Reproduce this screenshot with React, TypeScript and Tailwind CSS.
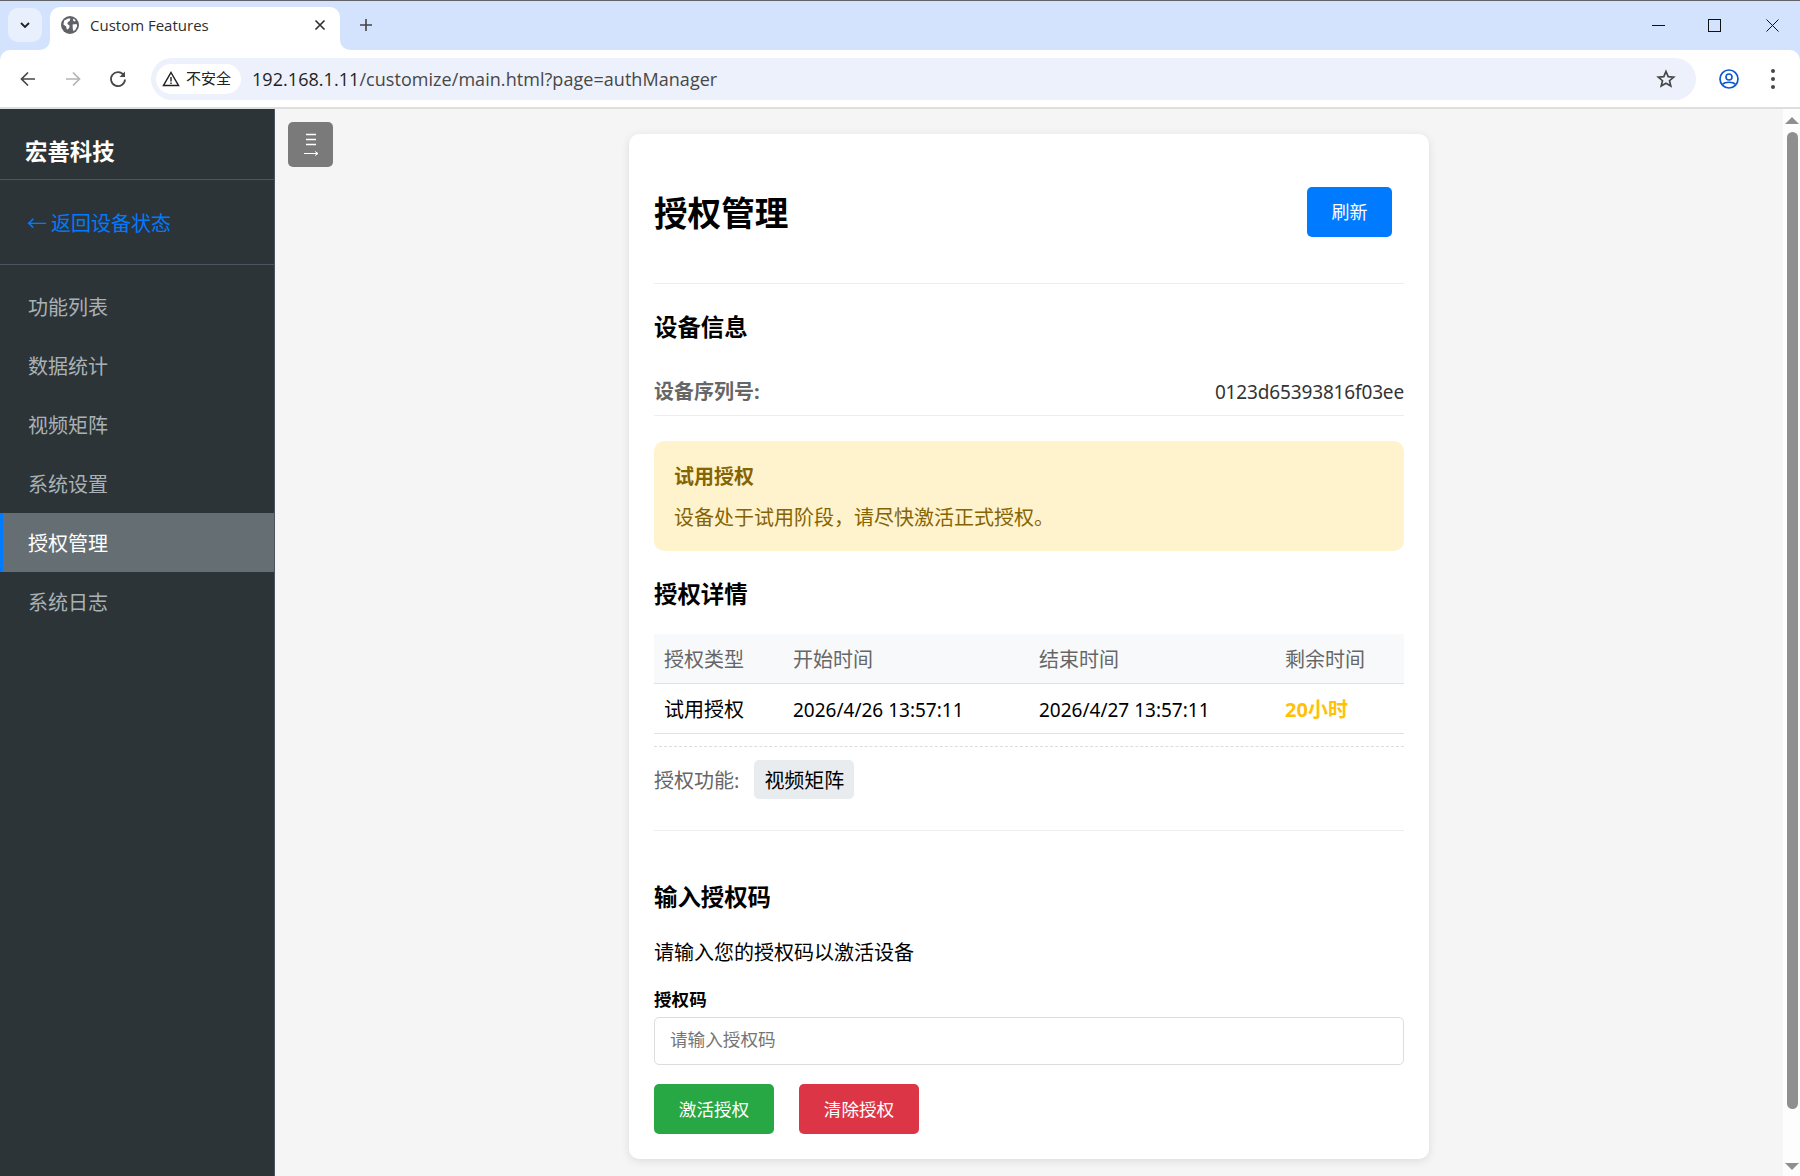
const cjk = '[font-family:"Noto_Sans","Noto_Sans_CJK_SC",sans-serif]';

function Flare({ side }: { side: "left" | "right" }) {
  return (
    <svg width="10" height="10" viewBox="0 0 10 10" className={side === "left" ? "absolute bottom-0 -left-[10px]" : "absolute bottom-0 -right-[10px]"}>
      <path d={side === "left" ? "M10 0 A10 10 0 0 1 0 10 L10 10 Z" : "M0 0 A10 10 0 0 0 10 10 L0 10 Z"} fill="#ffffff" />
    </svg>
  );
}

function Globe() {
  return (
    <svg width="18" height="18" viewBox="0 0 18 18">
      <circle cx="9" cy="9" r="9" fill="#5f6368" />
      <path d="M3.2 4.6 L7.2 2.4 L9.4 2.6 L8.8 4.8 L6.8 6.2 L6.4 8 L8.6 9.4 L8.4 11.4 L6.8 13.6 L5.6 13 L5.2 10.4 L2.4 8.4 Z" fill="#ffffff" />
      <path d="M11.6 8.4 L15.6 8 L16.2 10 L14.6 13.4 L12.6 15.2 L11.8 13 Z M12.2 2.6 L14.4 4 L14.2 5.4 L12.2 5 Z" fill="#ffffff" />
    </svg>
  );
}

function Chrome() {
  return (
    <header className="shrink-0">
      <div className="h-[50px] bg-[#d3e3fd] border-t border-[#5f6368] relative flex">
        <div className="ml-2 mt-[7px] w-[34px] h-[34px] rounded-[10px] bg-[#e9f0fd] flex items-center justify-center">
          <svg width="12" height="12" viewBox="0 0 12 12"><path d="M2 4 L6 8 L10 4" fill="none" stroke="#1f1f1f" strokeWidth="1.8" /></svg>
        </div>
        <div className="relative ml-[8px] mt-[6px] w-[290px] h-[43px] bg-white rounded-t-[10px] flex items-center pl-[11px] pb-[7px]">
          <Flare side="left" />
          <Flare side="right" />
          <Globe />
          <span className='ml-[11px] text-[15px] text-[#2e2e2e] font-["Open_Sans",sans-serif]'>Custom Features</span>
          <svg className="absolute left-[264px] top-[12px]" width="12" height="12" viewBox="0 0 12 12"><path d="M1.5 1.5 L10.5 10.5 M10.5 1.5 L1.5 10.5" stroke="#333" strokeWidth="1.7" /></svg>
        </div>
        <svg className="ml-[19px] mt-[17px]" width="14" height="14" viewBox="0 0 14 14"><path d="M7 1 V13 M1 7 H13" stroke="#444" strokeWidth="1.6" /></svg>
        <div className="ml-auto flex items-start">
          <svg className="mt-[24px] mr-[43px]" width="13" height="1" viewBox="0 0 13 1"><path d="M0 .5 H13" stroke="#111" /></svg>
          <svg className="mt-[18px] mr-[45px]" width="13" height="13" viewBox="0 0 13 13"><rect x=".5" y=".5" width="12" height="12" fill="none" stroke="#111" /></svg>
          <svg className="mt-[18px] mr-[21px]" width="13" height="13" viewBox="0 0 13 13"><path d="M.5 .5 L12.5 12.5 M12.5 .5 L.5 12.5" stroke="#111" /></svg>
        </div>
      </div>
      <div className="bg-[#d3e3fd]">
        <div className="h-[57px] bg-white rounded-t-[10px] flex items-center relative">
          <svg className="ml-[18px]" width="20" height="20" viewBox="0 0 20 20"><path d="M17 10 H4 M10 3.5 L3.5 10 L10 16.5" fill="none" stroke="#474747" strokeWidth="1.7" /></svg>
          <svg className="ml-[25px]" width="20" height="20" viewBox="0 0 20 20"><path d="M3 10 H16 M10 3.5 L16.5 10 L10 16.5" fill="none" stroke="#b4b4b4" strokeWidth="1.7" /></svg>
          <svg className="ml-[25px]" width="20" height="20" viewBox="0 0 20 20"><path d="M15.8 6.2 A7 7 0 1 0 17 10.5" fill="none" stroke="#474747" strokeWidth="1.8" /><path d="M17 2.5 V8 H11.5 Z" fill="#474747" /></svg>
          <div className="ml-[23px] w-[1545px] h-[42px] rounded-full bg-[#ecf1fb] flex items-center pl-[5px]">
            <div className={`w-[85px] h-[30px] rounded-full bg-white flex items-center pl-[6px] ${cjk}`}>
              <svg width="18" height="18" viewBox="0 0 18 18"><path d="M9 2.5 L16.5 15.5 H1.5 Z" fill="none" stroke="#222" strokeWidth="1.5" /><path d="M9 7 V11.5 M9 12.5 V14" stroke="#222" strokeWidth="1.4" /></svg>
              <span className="ml-[6px] text-[15px] text-[#222] whitespace-nowrap">不安全</span>
            </div>
            <div className='ml-[11px] pt-px text-[18px] text-[#474747] font-["Open_Sans",sans-serif] tracking-[0.05px] whitespace-nowrap'>
              <span className="text-[#1f1f1f]">192.168.1.11</span>/customize/main.html?page=authManager
            </div>
            <svg className="ml-auto mr-[20px]" width="20" height="20" viewBox="0 0 20 20"><path d="M10 2.5 L12.2 7.6 L17.7 8.1 L13.5 11.7 L14.8 17.1 L10 14.3 L5.2 17.1 L6.5 11.7 L2.3 8.1 L7.8 7.6 Z" fill="none" stroke="#474747" strokeWidth="1.7" strokeLinejoin="miter" /></svg>
          </div>
          <svg className="ml-[23px]" width="20" height="20" viewBox="0 0 20 20"><circle cx="10" cy="10" r="9" fill="none" stroke="#0b57d0" strokeWidth="1.7" /><circle cx="10" cy="8" r="3" fill="none" stroke="#0b57d0" strokeWidth="1.6" /><path d="M3.8 15.2 C6 12.6 14 12.6 16.2 15.2" fill="none" stroke="#0b57d0" strokeWidth="1.7" /></svg>
          <div className="ml-[32px] flex flex-col gap-[4px]">
            <span className="w-[4px] h-[4px] rounded-full bg-[#474747]" />
            <span className="w-[4px] h-[4px] rounded-full bg-[#474747]" />
            <span className="w-[4px] h-[4px] rounded-full bg-[#474747]" />
          </div>
        </div>
      </div>
      <div className="h-[2px] bg-[#dedede]" />
    </header>
  );
}

const menu = ["功能列表", "数据统计", "视频矩阵", "系统设置", "授权管理", "系统日志"];

function Sidebar() {
  return (
    <aside className="w-[275px] shrink-0 bg-[#2c3437] border-r border-[#4a5560]">
      <div className="h-[71px] pt-[28px] pl-[25px] border-b border-[#4a5560]">
        <div className="text-[22.4px] leading-[30px] font-bold text-white">宏善科技</div>
      </div>
      <div className="h-[85px] pl-[27px] pt-[4px] flex items-center border-b border-[#4a5560] text-[20px] text-[#007bff]">
        <span className="mr-[4px]">←</span>
        <span>返回设备状态</span>
      </div>
      <nav className="pt-[12px]">
        {menu.map((m) =>
          m === "授权管理" ? (
            <div key={m} className="h-[59px] pt-[3px] flex items-center pl-[25px] border-l-[3px] border-[#007bff] bg-[#656f73] text-[20px] text-white">{m}</div>
          ) : (
            <div key={m} className="h-[59px] pt-[3px] flex items-center pl-[28px] text-[20px] text-[#a9b1b6]">{m}</div>
          )
        )}
      </nav>
    </aside>
  );
}

function H2({ children, className }: { children: React.ReactNode; className: string }) {
  return <h2 className={`text-[23.4px] leading-[32px] font-bold text-black ${className}`}>{children}</h2>;
}

function Card() {
  return (
    <section className="w-[800px] mx-auto mt-[25px] bg-white rounded-[10px] shadow-[0_2px_10px_rgba(0,0,0,0.1)] px-[25px] pt-[25px] pb-[25px]">
      <div className="mt-[28px] h-[50px] mb-[46px] flex items-center justify-between pr-3">
        <h1 className="pt-[1px] text-[33.6px] font-bold text-black leading-[50px]">授权管理</h1>
        <button className="w-[85px] h-[50px] rounded-[5px] bg-[#007bff] text-white text-[18px]">刷新</button>
      </div>
      <div className="h-px bg-[#eeeeee]" />
      <H2 className="mt-[27px]">设备信息</H2>
      <div className="mt-[26px] h-[47px] flex items-center justify-between border-b border-[#eeeeee] text-[20px]">
        <span className="font-bold text-[#666666]">设备序列号:</span>
        <span className="text-[19px] tracking-[-0.15px] text-[#333333]">0123d65393816f03ee</span>
      </div>
      <div className="mt-[25px] h-[110px] rounded-[10px] bg-[#fff3cd] px-[20px] pt-[20px] text-[20px] leading-[32px] text-[#856404]">
        <div className="font-bold">试用授权</div>
        <p className="mt-[9px]">设备处于试用阶段，请尽快激活正式授权。</p>
      </div>
      <H2 className="mt-[27px]">授权详情</H2>
      <table className="mt-[24px] w-full table-fixed border-collapse text-[20px]">
        <colgroup>
          <col className="w-[129px]" />
          <col className="w-[246px]" />
          <col className="w-[246px]" />
          <col className="w-[129px]" />
        </colgroup>
        <thead>
          <tr className="h-[49px] bg-[#f8f9fa] border-b border-[#dee2e6] text-[#666666]">
            <th className="pl-[10px] pt-[3px] text-left font-normal">授权类型</th>
            <th className="pl-[10px] pt-[3px] text-left font-normal">开始时间</th>
            <th className="pl-[10px] pt-[3px] text-left font-normal">结束时间</th>
            <th className="pl-[10px] pt-[3px] text-left font-normal">剩余时间</th>
          </tr>
        </thead>
        <tbody>
          <tr className="h-[50px] border-b border-[#dee2e6] text-black">
            <td className="pl-[10px] pt-[4px]">试用授权</td>
            <td className="pl-[10px] pt-[4px] text-[19px]">2026/4/26 13:57:11</td>
            <td className="pl-[10px] pt-[4px] text-[19px]">2026/4/27 13:57:11</td>
            <td className="pl-[10px] pt-[4px] font-bold text-[#ffc107]">20小时</td>
          </tr>
        </tbody>
      </table>
      <div className="mt-[12px] border-t border-dashed border-[#dddddd] pt-[13px] flex items-center text-[20px]">
        <span className="pt-[3px] text-[#666666]">授权功能:</span>
        <span className="ml-[15px] pt-[3px] w-[100px] h-[39px] rounded-[5px] bg-[#e9ecef] flex items-center justify-center text-black">视频矩阵</span>
      </div>
      <div className="mt-[31px] h-px bg-[#eeeeee]" />
      <H2 className="mt-[50px]">输入授权码</H2>
      <p className="mt-[24px] text-[20px] leading-[32px] text-black">请输入您的授权码以激活设备</p>
      <label className="block mt-[17px] text-[17.6px] leading-[26px] font-bold text-black">授权码</label>
      <input
        className="block mt-[5px] w-full h-[48px] rounded-[5px] border border-[#dddddd] px-[15px] pb-[4px] text-[17.6px] placeholder:text-[#757575] outline-none"
        placeholder="请输入授权码"
      />
      <div className="mt-[19px] flex gap-[25px]">
        <button className="w-[120px] h-[50px] pt-[2px] rounded-[5px] bg-[#28a745] text-white text-[17.6px]">激活授权</button>
        <button className="w-[120px] h-[50px] pt-[2px] rounded-[5px] bg-[#dc3545] text-white text-[17.6px]">清除授权</button>
      </div>
    </section>
  );
}

function Scrollbar() {
  return (
    <div className="w-[17px] shrink-0 bg-[#fdfdfd] flex flex-col items-center pt-[8px]">
      <svg width="14" height="7" viewBox="0 0 14 7" className="ml-[1px]"><path d="M7 0 L14 7 H0 Z" fill="#8f8f8f" /></svg>
      <div className="mt-[8px] ml-[1px] w-[11px] h-[977px] rounded-full bg-[#8f8f8f]" />
      <svg width="14" height="7" viewBox="0 0 14 7" className="mt-[54px] ml-[1px]"><path d="M7 7 L14 0 H0 Z" fill="#8f8f8f" /></svg>
    </div>
  );
}

export default function App() {
  return (
    <div className={`w-[1800px] h-[1176px] overflow-hidden flex flex-col bg-[#f5f5f5] ${cjk}`}>
      <Chrome />
      <div className="flex-1 flex min-h-0">
        <Sidebar />
        <main className="relative flex-1 min-w-0">
          <button className="absolute left-[13px] top-[13px] w-[45px] h-[45px] rounded-[5px] bg-[#7a7a7a] flex items-center justify-center">
            <svg width="16" height="26" viewBox="0 0 16 26">
              <path d="M3 2.5 H13 M3 7.5 H13 M3 12.5 H13" stroke="#fff" strokeWidth="1.6" />
              <path d="M1 21.5 H15 M12 19.5 L15 21.5 L12 23.5" fill="none" stroke="#fff" strokeWidth="1" />
            </svg>
          </button>
          <Card />
        </main>
        <Scrollbar />
      </div>
    </div>
  );
}
